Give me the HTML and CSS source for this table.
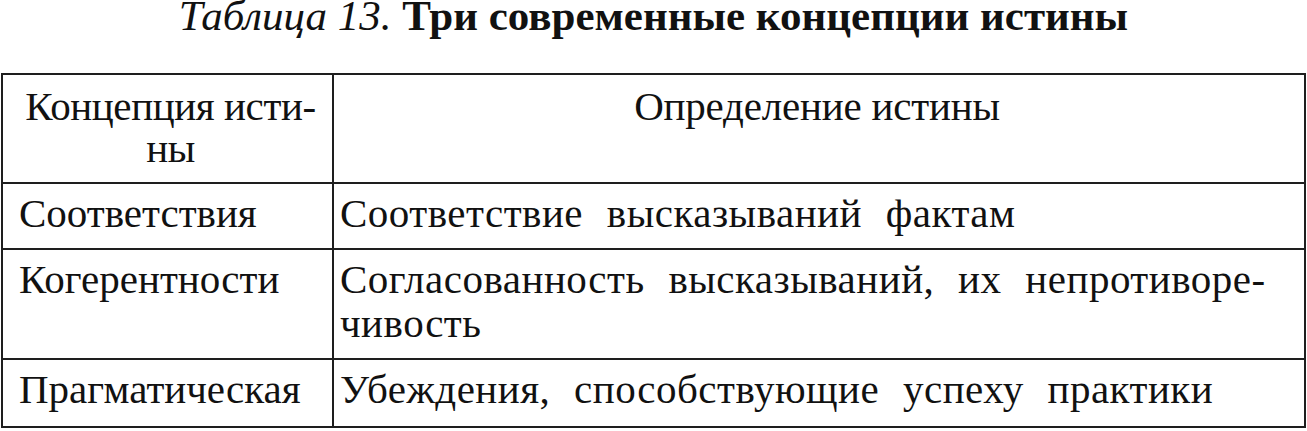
FILE: index.html
```html
<!DOCTYPE html>
<html lang="ru">
<head>
<meta charset="utf-8">
<title>Таблица 13</title>
<link rel="stylesheet" href="styles.css">
</head>
<body>
<h1 class="caption"><span class="caption-num">Таблица 13.</span> <span class="caption-title">Три современные концепции истины</span></h1>
<table class="truth-table">
  <colgroup>
    <col class="col-name">
    <col class="col-def">
  </colgroup>
  <thead>
    <tr>
      <th class="head-name">Концепция исти-<br>ны</th>
      <th class="head-def">Определение истины</th>
    </tr>
  </thead>
  <tbody>
    <tr>
      <td class="name">Соответствия</td>
      <td class="def">Соответствие высказываний фактам</td>
    </tr>
    <tr>
      <td class="name">Когерентности</td>
      <td class="def">Согласованность высказываний, их непротиворе-<br>чивость</td>
    </tr>
    <tr class="last-row">
      <td class="name">Прагматическая</td>
      <td class="def">Убеждения, способствующие успеху практики</td>
    </tr>
  </tbody>
</table>
</body>
</html>
```

FILE: styles.css
```css
html, body {
  margin: 0;
  padding: 0;
  background: #ffffff;
}

body {
  font-family: "Liberation Serif", "Times New Roman", serif;
  color: #111111;
}

.caption {
  margin: 0 0 42px 0;
  padding: 0;
  font-size: 43px;
  line-height: 31px;
  font-weight: normal;
  text-align: center;
}

.caption-num {
  font-style: italic;
}

.caption-title {
  font-weight: bold;
}

.truth-table {
  margin-left: 1px;
  width: 1305px;
  border-collapse: collapse;
  table-layout: fixed;
  border: 2px solid #1e1e1e;
  font-size: 41px;
  line-height: 44px;
}

.col-name {
  width: 331px;
}

.truth-table th,
.truth-table td {
  border: 2px solid #1e1e1e;
  vertical-align: top;
  font-weight: normal;
  padding: 7px 6px 13px 6px;
}

.truth-table th {
  line-height: 42px;
  padding-top: 10px;
  padding-bottom: 13px;
}

.truth-table .head-name {
  text-align: center;
  letter-spacing: -0.4px;
  padding-left: 9px;
  padding-right: 3px;
}

.truth-table .head-def {
  text-align: center;
  word-spacing: 0;
  letter-spacing: -0.2px;
  padding-right: 10px;
}

.truth-table .name {
  text-align: left;
  padding-left: 16px;
}

.truth-table .def {
  text-align: left;
  word-spacing: 13px;
  letter-spacing: 0.5px;
}

.truth-table .last-row td {
  padding-bottom: 15px;
}
```
